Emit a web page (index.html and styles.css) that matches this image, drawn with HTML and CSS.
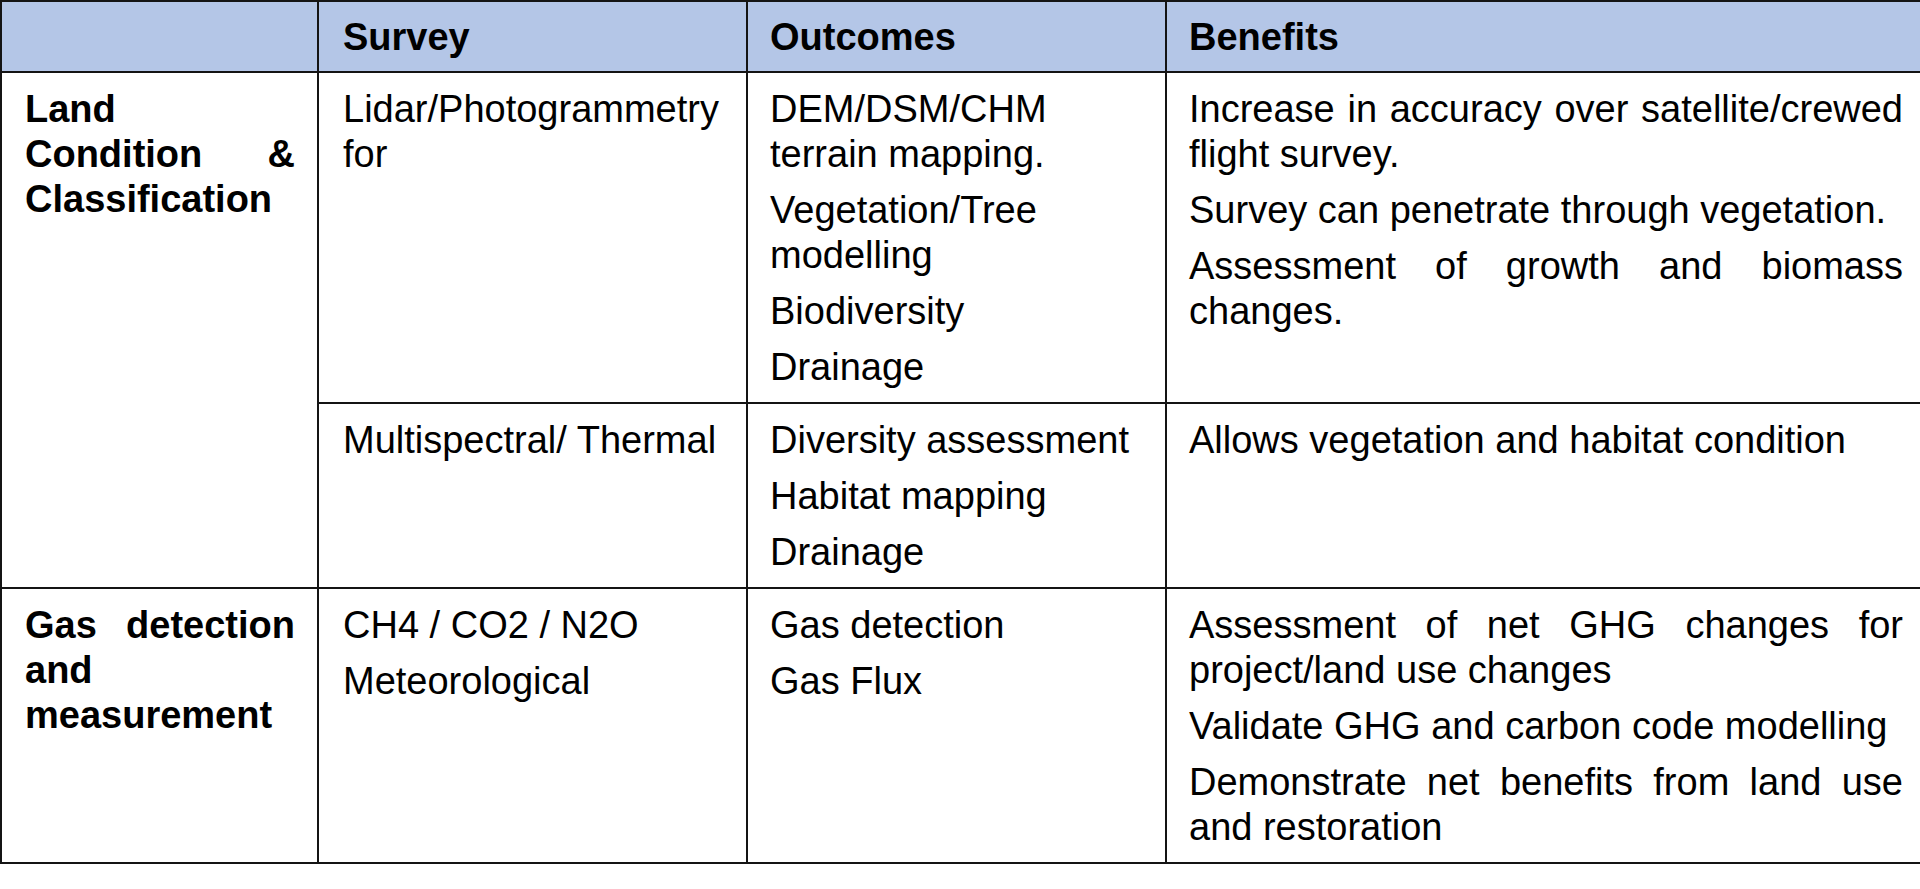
FILE: index.html
```html
<!DOCTYPE html>
<html lang="en">
<head>
<meta charset="utf-8">
<title>Survey table</title>
<link rel="stylesheet" href="styles.css">
</head>
<body>
<table class="grid">
  <colgroup>
    <col class="c-label">
    <col class="c-survey">
    <col class="c-outcomes">
    <col class="c-benefits">
  </colgroup>
  <thead>
    <tr>
      <th class="label"></th>
      <th class="survey">Survey</th>
      <th>Outcomes</th>
      <th class="last">Benefits</th>
    </tr>
  </thead>
  <tbody>
    <tr>
      <td class="label" rowspan="2"><p>Land Condition &amp; Classification</p></td>
      <td class="survey"><p>Lidar/Photogrammetry for</p></td>
      <td>
        <p>DEM/DSM/CHM terrain mapping.</p>
        <p>Vegetation/Tree modelling</p>
        <p>Biodiversity</p>
        <p>Drainage</p>
      </td>
      <td class="last">
        <p>Increase in accuracy over satellite/crewed flight survey.</p>
        <p>Survey can penetrate through vegetation.</p>
        <p>Assessment of growth and biomass changes.</p>
      </td>
    </tr>
    <tr>
      <td class="survey"><p>Multispectral/ Thermal</p></td>
      <td>
        <p>Diversity assessment</p>
        <p>Habitat mapping</p>
        <p>Drainage</p>
      </td>
      <td class="last"><p>Allows vegetation and habitat condition</p></td>
    </tr>
    <tr>
      <td class="label"><p>Gas detection and measurement</p></td>
      <td class="survey">
        <p>CH4 / CO2 / N2O</p>
        <p>Meteorological</p>
      </td>
      <td>
        <p>Gas detection</p>
        <p>Gas Flux</p>
      </td>
      <td class="last">
        <p>Assessment of net GHG changes for project/land use changes</p>
        <p>Validate GHG and carbon code modelling</p>
        <p>Demonstrate net benefits from land use and restoration</p>
      </td>
    </tr>
  </tbody>
</table>
</body>
</html>
```

FILE: styles.css
```css
html, body {
  margin: 0;
  padding: 0;
  background: #ffffff;
  overflow: hidden;
}

body {
  font-family: "Liberation Sans", Arial, sans-serif;
  color: #000000;
}

.grid {
  border-collapse: collapse;
  table-layout: fixed;
  width: 1920px;
  font-size: 38px;
  line-height: 45px;
}

.c-label { width: 317px; }
.c-survey { width: 429px; }
.c-outcomes { width: 419px; }
.c-benefits { width: 755px; }

.grid th,
.grid td {
  border: 2px solid #141414;
  vertical-align: top;
  text-align: justify;
  padding: 14px 21px 12px 22px;
}

.grid th {
  background: #b4c6e7;
  font-weight: bold;
  text-align: left;
  padding-top: 13px;
  padding-bottom: 11px;
}

.grid .survey {
  padding-left: 24px;
  padding-right: 19px;
}

.grid .label {
  font-weight: bold;
  padding-left: 23px;
  padding-right: 22px;
}

.grid .last {
  border-right: none;
  padding-right: 18px;
}

.grid p {
  margin: 0;
}

.grid p + p {
  margin-top: 11px;
}
```
